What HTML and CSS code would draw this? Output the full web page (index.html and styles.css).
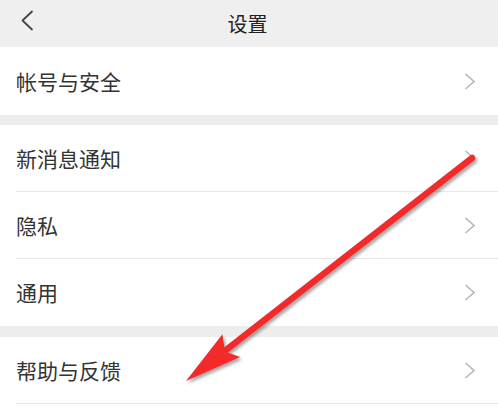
FILE: index.html
```html
<!DOCTYPE html>
<html lang="zh-CN">
<head>
<meta charset="utf-8">
<title>设置</title>
<link rel="stylesheet" href="styles.css">
</head>
<body>
<div class="page">
  <header class="topbar">
    <svg class="back" width="14" height="22" viewBox="0 0 14 22"><polyline points="11,1.5 1.5,10.5 11,19.5" fill="none" stroke="#444" stroke-width="1.8" stroke-linecap="round" stroke-linejoin="round"/></svg>
    <h1 class="title">设置</h1>
  </header>

  <section class="group">
    <div class="row"><div class="row-inner"><span class="label">帐号与安全</span><svg class="chev" width="12" height="17" viewBox="0 0 12 17"><polyline points="1.5,1 10,8.5 1.5,16" fill="none" stroke="#b4b4b4" stroke-width="1.5"/></svg></div></div>
  </section>

  <section class="group">
    <div class="row"><div class="row-inner"><span class="label">新消息通知</span><svg class="chev" width="12" height="17" viewBox="0 0 12 17"><polyline points="1.5,1 10,8.5 1.5,16" fill="none" stroke="#b4b4b4" stroke-width="1.5"/></svg></div></div>
    <div class="row"><div class="row-inner"><span class="label">隐私</span><svg class="chev" width="12" height="17" viewBox="0 0 12 17"><polyline points="1.5,1 10,8.5 1.5,16" fill="none" stroke="#b4b4b4" stroke-width="1.5"/></svg></div></div>
    <div class="row last"><div class="row-inner"><span class="label">通用</span><svg class="chev" width="12" height="17" viewBox="0 0 12 17"><polyline points="1.5,1 10,8.5 1.5,16" fill="none" stroke="#b4b4b4" stroke-width="1.5"/></svg></div></div>
  </section>

  <section class="group">
    <div class="row"><div class="row-inner"><span class="label">帮助与反馈</span><svg class="chev" width="12" height="17" viewBox="0 0 12 17"><polyline points="1.5,1 10,8.5 1.5,16" fill="none" stroke="#b4b4b4" stroke-width="1.5"/></svg></div></div>
    <div class="filler"></div>
  </section>

  <svg class="arrow" width="498" height="415" viewBox="0 0 498 415">
    <defs>
      <filter id="sh" x="-10%" y="-10%" width="130%" height="130%">
        <feDropShadow dx="2" dy="2.5" stdDeviation="1.5" flood-color="#000" flood-opacity="0.35"/>
      </filter>
    </defs>
    <g filter="url(#sh)" fill="#f2292b">
      <line x1="472" y1="158" x2="226" y2="350" stroke="#f2292b" stroke-width="6.5" stroke-linecap="round"/>
      <polygon points="186,381 222.4,334.2 225,351.5 240.2,357"/>
    </g>
  </svg>
</div>
</body>
</html>
```

FILE: styles.css
```css
html, body {
  margin: 0;
  padding: 0;
  overflow: hidden;
}
body {
  background: #ededed;
  font-family: "Noto Sans CJK SC", "Noto Sans", sans-serif;
  color: #333;
}
.page {
  position: relative;
  width: 498px;
  height: 415px;
  overflow: hidden;
}
.topbar {
  height: 47px;
  background: #efefef;
  display: flex;
  align-items: center;
  justify-content: center;
  position: relative;
}
.back {
  position: absolute;
  left: 21px;
  top: 10px;
}
.title {
  margin: 0 3px 0 0;
  font-size: 20px;
  font-weight: normal;
  color: #222;
  line-height: 1;
}
.group {
  background: #fff;
  margin-bottom: 11px;
}
.group:first-of-type {
  margin-bottom: 10px;
}
.row {
  padding-left: 16px;
}
.row-inner {
  height: 67px;
  box-sizing: border-box;
  border-bottom: 1px solid #e8e8e8;
  display: flex;
  align-items: center;
  justify-content: space-between;
  padding-right: 22px;
}
.group:first-of-type .row-inner {
  height: 68px;
  border-bottom: none;
}
.row.last .row-inner {
  border-bottom: none;
}
.filler {
  height: 40px;
}
.label {
  font-size: 21px;
  line-height: 1;
  letter-spacing: 0;
}
.chev {
  display: block;
}
.arrow {
  position: absolute;
  left: 0;
  top: 0;
  pointer-events: none;
}
```
